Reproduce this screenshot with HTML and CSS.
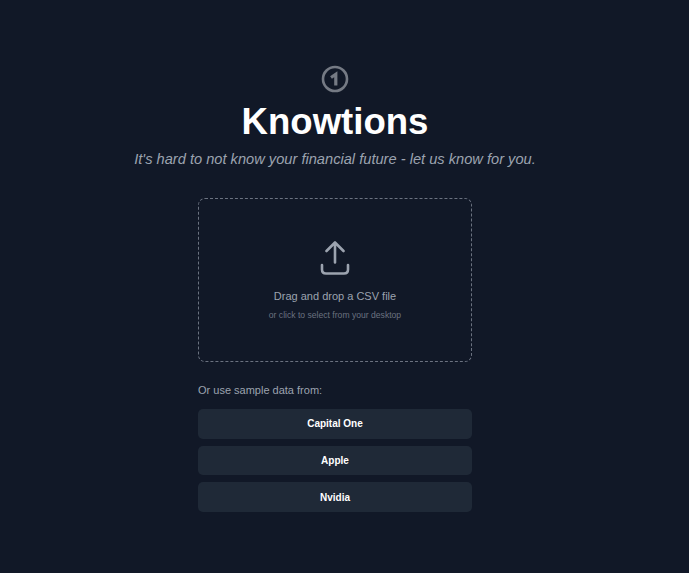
FILE: index.html
```html
<!DOCTYPE html>
<html lang="en">
<head>
<meta charset="UTF-8">
<meta name="viewport" content="width=device-width, initial-scale=1.0">
<title>Knowtions</title>
<link rel="stylesheet" href="styles.css">
</head>
<body>
<div class="container">
  <svg class="logo" width="28" height="28" viewBox="0 0 28 28" fill="none">
    <circle cx="14" cy="14" r="12" stroke="#757a84" stroke-width="2.6"/>
    <path d="M10 12.5 L14.8 9.2 V20.5" stroke="#757a84" stroke-width="3.2"/>
  </svg>
  <h1>Knowtions</h1>
  <p class="tagline">It's hard to not know your financial future - let us know for you.</p>

  <div class="dropzone">
    <svg class="upload-icon" width="30" height="36" viewBox="0 0 30 36" fill="none" stroke="#9ca3af" stroke-width="2.6" stroke-linecap="round" stroke-linejoin="round">
      <path d="M15 22.5 V2.5 M6.5 11 L15 2.5 L23.5 11"/>
      <path d="M2 25 V29.5 Q2 33.5 6 33.5 H24 Q28 33.5 28 29.5 V25"/>
    </svg>
    <div class="drop-title">Drag and drop a CSV file</div>
    <div class="drop-sub">or click to select from your desktop</div>
  </div>

  <div class="samples">
    <div class="samples-label">Or use sample data from:</div>
    <button>Capital One</button>
    <button>Apple</button>
    <button>Nvidia</button>
  </div>
</div>
</body>
</html>
```

FILE: styles.css
```css
body {
  font-family: "Liberation Sans", Arial, sans-serif;
  background-color: #111827;
  margin: 0;
  padding: 0;
  height: 573px;
  overflow: hidden;
}
.container {
  width: 670px;
  display: flex;
  flex-direction: column;
  align-items: center;
  padding-top: 65px;
}
.logo {
  display: block;
}
h1 {
  margin: 5px 0 0;
  font-size: 36.6px;
  line-height: 48px;
  font-weight: 700;
  color: #fff;
}
.tagline {
  margin: 2px 0 0;
  font-size: 14.65px;
  line-height: 22px;
  font-style: italic;
  color: #9ca3af;
}
.dropzone {
  box-sizing: border-box;
  width: 274px;
  height: 164px;
  margin-top: 28px;
  border: 1px dashed #6b7280;
  border-radius: 7px;
  display: flex;
  flex-direction: column;
  align-items: center;
  padding-top: 41px;
}
.upload-icon {
  display: block;
}
.drop-title {
  margin-top: 11px;
  font-size: 11px;
  line-height: 18px;
  color: #9ca3af;
}
.drop-sub {
  margin-top: 3px;
  font-size: 8.6px;
  line-height: 14px;
  color: #6b7280;
}
.samples {
  width: 274px;
  margin-top: 19px;
  display: flex;
  flex-direction: column;
  gap: 7.3px;
}
.samples-label {
  font-size: 11px;
  line-height: 18px;
  color: #9ca3af;
  margin-bottom: 3px;
}
button {
  height: 29.3px;
  padding: 0;
  font-family: inherit;
  font-size: 10px;
  font-weight: 700;
  color: #fff;
  background-color: #1f2937;
  border: none;
  border-radius: 5px;
  cursor: pointer;
}
```
